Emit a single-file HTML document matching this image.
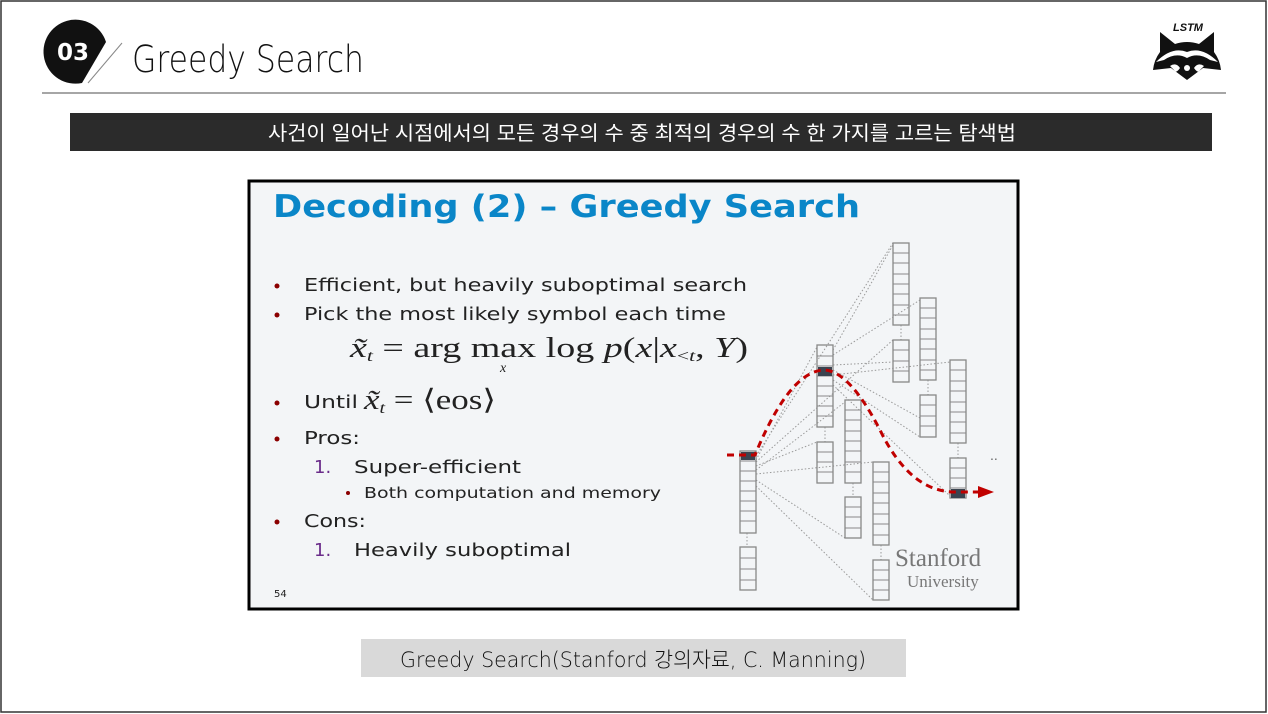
<!DOCTYPE html>
<html><head><meta charset="utf-8"><style>
html,body{margin:0;padding:0;background:#fff;}
body{width:1268px;height:714px;overflow:hidden;position:relative;font-family:"Liberation Sans","Noto Sans CJK KR",sans-serif;}
</style></head><body>
<svg width="1268" height="714" viewBox="0 0 1268 714" xmlns="http://www.w3.org/2000/svg" style="position:absolute;left:0;top:0">
<rect x="1" y="1" width="1265" height="711" fill="#fff" stroke="#333" stroke-width="1.5"/>
<!-- header -->
<path d="M106 42 A32 32 0 1 0 82 83 Z" fill="#111"/>
<text x="73" y="60" font-size="23" font-weight="bold" fill="#fff" text-anchor="middle" font-family="DejaVu Sans,sans-serif">03</text>
<line x1="88" y1="83" x2="122" y2="43" stroke="#888" stroke-width="1"/>
<text x="132" y="72" font-size="37" fill="#111" font-family="DejaVu Sans,sans-serif" font-weight="200" textLength="232" lengthAdjust="spacingAndGlyphs">Greedy Search</text>
<line x1="42" y1="93" x2="1226" y2="93" stroke="#888" stroke-width="1.5"/>
<!-- raccoon logo -->
<text x="1188" y="31" font-size="11" font-style="italic" font-weight="bold" text-anchor="middle" fill="#111">LSTM</text>
<path d="M1160 32 L1175 44 Q1187 40 1199 44 L1214 32 L1214 52 Q1220 60 1221 70 L1203 68 Q1195 74 1187 80 Q1179 74 1171 68 L1153 70 Q1154 60 1160 52 Z" fill="#111"/>
<path d="M1156 62 Q1172 46 1187 52 Q1202 46 1218 62 L1210 60 Q1198 52 1187 58 Q1176 52 1164 60 Z" fill="#fff"/>
<path d="M1170 66 Q1176 62 1180 68 Q1176 74 1174 70 Z M1204 66 Q1198 62 1194 68 Q1198 74 1200 70 Z" fill="#fff"/>
<circle cx="1187" cy="68" r="3" fill="#fff"/>
<!-- bar -->
<rect x="70" y="113" width="1142" height="38" fill="#2b2b2b"/>
<text x="268" y="140" font-size="20" fill="#fff" textLength="748" lengthAdjust="spacingAndGlyphs">사건이 일어난 시점에서의 모든 경우의 수 중 최적의 경우의 수 한 가지를 고르는 탐색법</text>
<!-- slide -->
<rect x="249" y="181" width="769" height="428" fill="#f3f5f7" stroke="#000" stroke-width="3"/>
<text x="273" y="217" font-size="31" font-weight="bold" fill="#0a86c8" font-family="DejaVu Sans,sans-serif" textLength="587" lengthAdjust="spacingAndGlyphs">Decoding (2) – Greedy Search</text>
<g font-family="DejaVu Sans,sans-serif" font-size="18" fill="#222">
<text x="304" y="291" textLength="443" lengthAdjust="spacingAndGlyphs">Efficient, but heavily suboptimal search</text>
<text x="304" y="320" textLength="422" lengthAdjust="spacingAndGlyphs">Pick the most likely symbol each time</text>
<text x="304" y="408" textLength="54" lengthAdjust="spacingAndGlyphs">Until</text>
<text x="304" y="444" textLength="56" lengthAdjust="spacingAndGlyphs">Pros:</text>
<text x="354" y="473" textLength="167" lengthAdjust="spacingAndGlyphs">Super-efficient</text>
<text x="364" y="498" font-size="15" textLength="297" lengthAdjust="spacingAndGlyphs">Both computation and memory</text>
<text x="304" y="527" textLength="62" lengthAdjust="spacingAndGlyphs">Cons:</text>
<text x="354" y="556" textLength="217" lengthAdjust="spacingAndGlyphs">Heavily suboptimal</text>
<text x="314" y="556" fill="#6a2b8a">1.</text>
<text x="314" y="473" fill="#6a2b8a">1.</text>
<text x="274" y="597" font-size="10">54</text>
</g>
<g fill="#8b0000"><circle cx="277" cy="286" r="2.5"/><circle cx="277" cy="315" r="2.5"/><circle cx="277" cy="403" r="2.5"/><circle cx="277" cy="439" r="2.5"/><circle cx="277" cy="522" r="2.5"/><circle cx="348" cy="493" r="2"/></g>
<g font-family="Liberation Serif,serif" font-size="28" fill="#222">
<text x="350" y="357" textLength="398" lengthAdjust="spacingAndGlyphs"><tspan font-style="italic">x̃</tspan><tspan font-size="16" font-style="italic" dy="4">t</tspan><tspan dy="-4"> = arg max log </tspan><tspan font-style="italic">p</tspan>(<tspan font-style="italic">x</tspan>|<tspan font-style="italic">x</tspan><tspan font-size="16" dy="4">&lt;<tspan font-style="italic">t</tspan></tspan><tspan dy="-4">, </tspan><tspan font-style="italic">Y</tspan>)</text>
<text x="500" y="372" font-size="14" font-style="italic">x</text>
<text x="364" y="409" textLength="132" lengthAdjust="spacingAndGlyphs"><tspan font-style="italic">x̃</tspan><tspan font-size="16" font-style="italic" dy="4">t</tspan><tspan dy="-4"> = ⟨eos⟩</tspan></text>
</g>
<!-- diagram -->
<g stroke="#999" stroke-width="1" stroke-dasharray="1.5 2" fill="none">
<path d="M756 456 L893 243 M756 460 L817 347 M756 462 L893 340 M756 466 L817 442 M756 470 L845 402 M756 474 L873 462 M756 480 L845 538 M756 486 L873 600"/>
<path d="M833 350 L893 245 M833 355 L920 300 M833 365 L893 362 M833 370 L920 418 M833 375 L950 362 M833 380 L920 437 M833 385 L950 496"/>
<path d="M747 533 V547 M825 427 V442 M853 483 V497 M881 545 V560 M901 325 V340 M928 380 V395 M958 443 V458"/>
</g>
<g fill="none" stroke="#888" stroke-width="1.3">
<rect x="740" y="451" width="16" height="82"/><rect x="740" y="547" width="16" height="43"/>
<rect x="817" y="345" width="16" height="82"/><rect x="817" y="442" width="16" height="41"/>
<rect x="845" y="400" width="16" height="83"/><rect x="845" y="497" width="16" height="41"/>
<rect x="873" y="462" width="16" height="83"/><rect x="873" y="560" width="16" height="40"/>
<rect x="893" y="243" width="16" height="82"/><rect x="893" y="340" width="16" height="42"/>
<rect x="920" y="298" width="16" height="82"/><rect x="920" y="395" width="16" height="42"/>
<rect x="950" y="360" width="16" height="83"/><rect x="950" y="458" width="16" height="40"/>
</g>
<g stroke="#888" stroke-width="1">
<path d="M740 461h16M740 471h16M740 481h16M740 491h16M740 501h16M740 511h16M740 521h16M740 558h16M740 569h16M740 580h16"/>
<path d="M817 356h16M817 366h16M817 376h16M817 386h16M817 396h16M817 406h16M817 416h16M817 452h16M817 462h16M817 472h16"/>
<path d="M845 410h16M845 420h16M845 431h16M845 441h16M845 451h16M845 462h16M845 472h16M845 507h16M845 517h16M845 528h16"/>
<path d="M873 472h16M873 482h16M873 493h16M873 503h16M873 514h16M873 524h16M873 535h16M873 570h16M873 580h16M873 590h16"/>
<path d="M893 253h16M893 263h16M893 274h16M893 284h16M893 294h16M893 305h16M893 315h16M893 350h16M893 361h16M893 371h16"/>
<path d="M920 308h16M920 318h16M920 329h16M920 339h16M920 349h16M920 360h16M920 370h16M920 405h16M920 416h16M920 426h16"/>
<path d="M950 370h16M950 381h16M950 391h16M950 402h16M950 412h16M950 422h16M950 433h16M950 468h16M950 478h16M950 488h16"/>
</g>
<g fill="#3a4450"><rect x="741" y="452" width="14" height="8"/><rect x="818" y="367" width="14" height="9"/><rect x="951" y="489" width="14" height="9"/></g>
<path d="M727 455 L755 455 Q790 370 825 370 Q850 372 880 430 Q910 492 955 492 L980 492" fill="none" stroke="#c00000" stroke-width="3" stroke-dasharray="7 5"/>
<path d="M978 486 L994 492 L978 498 Z" fill="#c00000"/>
<text x="990" y="460" font-size="14" fill="#666">..</text>
<text x="895" y="566" font-family="Liberation Serif,serif" font-size="25" fill="#777">Stanford</text>
<text x="907" y="587" font-family="Liberation Serif,serif" font-size="17" fill="#777">University</text>
<!-- caption -->
<rect x="361" y="639" width="545" height="38" fill="#d9d9d9"/>
<text x="400" y="667" font-size="21" fill="#111" font-family="DejaVu Sans,Noto Sans CJK KR,sans-serif" font-weight="200" textLength="466" lengthAdjust="spacingAndGlyphs">Greedy Search(Stanford 강의자료, C. Manning)</text>
</svg>
</body></html>
